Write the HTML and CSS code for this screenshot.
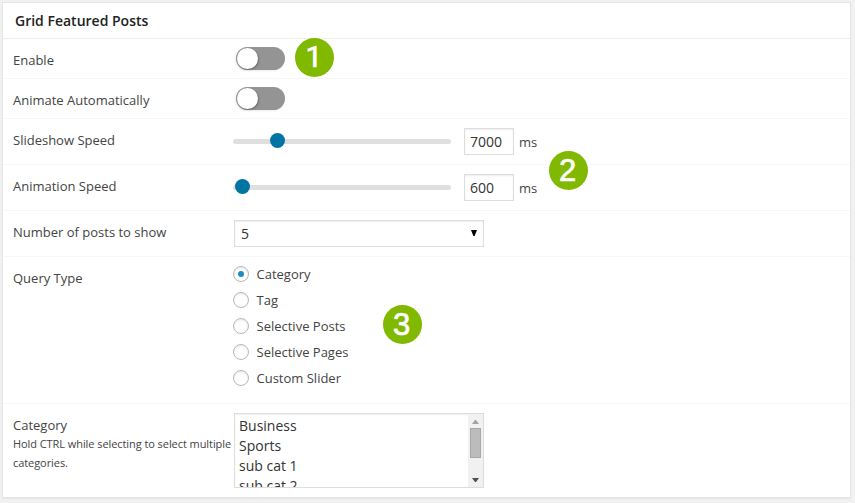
FILE: index.html
```html
<!DOCTYPE html>
<html lang="en">
<head>
<meta charset="utf-8">
<title>Grid Featured Posts</title>
<link rel="stylesheet" href="styles.css">
</head>
<body>
<section class="panel">
  <h3 class="panel-title">Grid Featured Posts</h3>
  <div class="row row-toggle">
    <span class="label">Enable</span>
    <span class="toggle"></span>
  </div>
  <div class="row row-toggle">
    <span class="label">Animate Automatically</span>
    <span class="toggle"></span>
  </div>
  <div class="row">
    <span class="label">Slideshow Speed</span>
    <div class="slider"><span class="handle" style="margin-left:37px"></span></div>
    <span class="input">7000</span><span class="unit">ms</span>
  </div>
  <div class="row">
    <span class="label">Animation Speed</span>
    <div class="slider"><span class="handle" style="margin-left:2px"></span></div>
    <span class="input">600</span><span class="unit">ms</span>
  </div>
  <div class="row">
    <span class="label">Number of posts to show</span>
    <div class="select"><span>5</span><svg class="caret" width="6" height="6" viewBox="0 0 6 6"><path d="M0 0h6L3.6 6H2.4z"/></svg></div>
  </div>
  <div class="row row-radios">
    <span class="label">Query Type</span>
    <div class="radios">
      <div class="option"><span class="radio checked"></span>Category</div>
      <div class="option"><span class="radio"></span>Tag</div>
      <div class="option"><span class="radio"></span>Selective Posts</div>
      <div class="option"><span class="radio"></span>Selective Pages</div>
      <div class="option"><span class="radio"></span>Custom Slider</div>
    </div>
  </div>
  <div class="row row-list">
    <div class="label">Category<small>Hold CTRL while selecting to select multiple categories.</small></div>
    <div class="listbox">
      <div class="items"><div>Business</div><div>Sports</div><div>sub cat 1</div><div>sub cat 2</div></div>
      <div class="scrollbar">
        <svg class="up" width="7" height="4" viewBox="0 0 7 4"><path d="M3 0h1l3 4H0z"/></svg>
        <span class="thumb"></span>
        <svg class="down" width="7" height="4" viewBox="0 0 7 4"><path d="M0 0h7L4 4H3z"/></svg>
      </div>
    </div>
  </div>
</section>
<span class="badge badge-one">1</span>
<span class="badge badge-two">2</span>
<span class="badge badge-three">3</span>
</body>
</html>
```
FILE: styles.css
```css
* { box-sizing: border-box; }
body {
  margin: 0;
  padding: 2px;
  height: 503px;
  overflow: hidden;
  background: #f1f1f1;
  color: #444;
  font: 13px/18px "Open Sans", sans-serif;
}
.panel {
  width: 849px;
  height: 496px;
  background: #fff;
  border: 1px solid #e5e5e5;
  box-shadow: 0 1px 1px rgba(0,0,0,.04);
}
.panel-title {
  margin: 0;
  height: 36px;
  padding: 8px 12px;
  border-bottom: 1px solid #eee;
  color: #222;
  font-size: 14px;
  font-weight: 600;
  line-height: 20px;
}
.row {
  display: flex;
  align-items: flex-start;
  height: 46px;
  padding: 9px 0 0 10px;
  border-bottom: 1px solid #f7f7f7;
}
.row-toggle { height: 40px; padding-top: 8px; }
.label { width: 220px; flex: none; padding-top: 3px; white-space: nowrap; }
.row-toggle .label { padding-top: 4px; }
.toggle {
  width: 49px;
  height: 23px;
  margin-left: 3px;
  border-radius: 12px;
  background: #949494;
  box-shadow: -1px 1px 2px rgba(0,0,0,.08);
}
.toggle::before {
  content: "";
  display: block;
  width: 21px;
  height: 21px;
  margin: 1px;
  border-radius: 50%;
  background: #fff;
  box-shadow: 1px 1px 2px rgba(0,0,0,.25);
}
.slider {
  display: flex;
  align-items: center;
  width: 218px;
  height: 5px;
  margin-top: 11px;
  border-radius: 3px;
  background: #dfdfdf;
}
.handle {
  width: 15px;
  height: 15px;
  margin-top: -2px;
  border-radius: 50%;
  background: #0074a2;
}
.input {
  width: 50px;
  height: 27px;
  margin-left: 13px;
  padding: 4px 5px;
  border: 1px solid #ddd;
  box-shadow: inset 0 1px 2px rgba(0,0,0,.07);
  color: #333;
  font-size: 14px;
}
.unit { margin-left: 5px; padding-top: 5px; }
.select {
  display: flex;
  justify-content: space-between;
  width: 250px;
  height: 27px;
  margin-left: 1px;
  padding: 4px 6px;
  border: 1px solid #ddd;
  box-shadow: inset 0 1px 2px rgba(0,0,0,.07);
  color: #333;
  font-size: 14px;
}
.caret { margin-top: 5px; fill: #000; }
.row-radios { height: 147px; }
.option { display: flex; height: 26px; line-height: 16px; }
.radio {
  width: 16px;
  height: 16px;
  margin-right: 7.5px;
  border: 1px solid #b4b9be;
  border-radius: 50%;
  background: #fff;
  box-shadow: inset 0 1px 2px rgba(0,0,0,.1);
}
.checked::before {
  content: "";
  display: block;
  width: 6px;
  height: 6px;
  margin: 4px;
  border-radius: 50%;
  background: #1e8cbe;
}
.row-list { height: 93px; border-bottom: 0; }
.label small {
  display: block;
  margin-right: -1px;
  font-size: 11px;
  line-height: 19px;
  letter-spacing: -.07px;
  white-space: normal;
}
.listbox {
  display: flex;
  justify-content: space-between;
  width: 250px;
  height: 75px;
  margin-left: 1px;
  border: 1px solid #ddd;
  overflow: hidden;
  box-shadow: inset 0 1px 2px rgba(0,0,0,.07);
  color: #333;
  font-size: 14px;
  line-height: 20px;
}
.items { padding: 2px 4px; }
.scrollbar {
  display: flex;
  flex-direction: column;
  align-items: center;
  width: 15px;
  height: 73px;
  padding: 6px 0 5px;
  background: #f1f1f1;
}
.thumb {
  width: 11px;
  height: 30px;
  margin: 4px 0 auto;
  border: 1px solid #a8a8a8;
  background: #bcbcbc;
}
.up { fill: #a3a3a3; }
.down { fill: #505050; }
.badge {
  position: absolute;
  width: 39px;
  height: 39px;
  border-radius: 50%;
  background: #80b900;
  color: #fff;
  font: 31px/40px "Liberation Sans", Arial, sans-serif;
  -webkit-text-stroke: .7px #fff;
  text-align: center;
  text-indent: -2px;
}
.badge-one { left: 295px; top: 38px; font-family: Roboto, sans-serif; font-size: 30px; line-height: 38px; text-indent: -1px; }
.badge-two { left: 549px; top: 151px; }
.badge-three { left: 383px; top: 305px; }
```
